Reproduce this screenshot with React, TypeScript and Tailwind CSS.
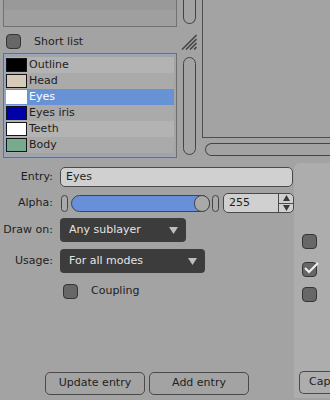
import React from "react"

interface Layer {
  name: string
  color: string
}

const layers: Layer[] = [
  { name: "Outline", color: "#000000" },
  { name: "Head", color: "#d6cbb8" },
  { name: "Eyes", color: "#ffffff" },
  { name: "Eyes iris", color: "#0000a8" },
  { name: "Teeth", color: "#ffffff" },
  { name: "Body", color: "#78aa8e" },
]

function CheckBox({ checked = false }: { checked?: boolean }) {
  return (
    <div className="relative w-[15px] h-[15px] rounded-[4px] bg-[#676767] border border-[#353535]">
      {checked && (
        <svg className="absolute -top-[3px] -left-[1px]" width="18" height="16" viewBox="0 0 18 16">
          <polyline points="3,8 7,12 16,3" fill="none" stroke="#f2f2f2" strokeWidth="2" />
        </svg>
      )}
    </div>
  )
}

function Dropdown({ label, width }: { label: string; width: string }) {
  return (
    <div className={`${width} h-[24px] rounded-[4px] bg-[#3c3c3c] flex items-center justify-between pl-[9px] pr-[8px] text-[#e4e4e4]`}>
      <span>{label}</span>
      <svg width="9" height="8" viewBox="0 0 9 8">
        <polygon points="0,1 9,1 4.5,8" fill="#bdbdbd" />
      </svg>
    </div>
  )
}

export default function App() {
  return (
    <div className="w-[330px] h-[400px] overflow-hidden bg-[#a3a3a3] text-[11px] text-[#1e1e1e] font-['DejaVu_Sans',sans-serif] flex flex-col">
      {/* top area */}
      <div className="flex h-[163px]">
        <div className="w-[202px] flex flex-col">
          <div className="flex h-[27px]">
            <div className="ml-[3px] w-[174px] h-[27px] border-l border-b border-r border-[#727272] flex flex-col">
              <div className="h-[10px] bg-[#999999]" />
              <div className="flex-1 bg-[#9f9f9f]" />
            </div>
            <div className="ml-[6px] w-[13px] h-[24px] rounded-b-full border-l border-r border-b border-[#444]" />
          </div>
          <div className="flex items-center h-[26px]">
            <div className="ml-[6px] mt-[2px]">
              <CheckBox />
            </div>
            <span className="ml-[13px] mt-[4px]">Short list</span>
            <svg className="ml-auto mr-[5px] mt-[3px]" width="16" height="16" viewBox="0 0 16 16">
              <line x1="1" y1="15.5" x2="15.5" y2="1" stroke="#474747" strokeWidth="1.6" />
              <line x1="5" y1="15.5" x2="15.5" y2="5" stroke="#474747" strokeWidth="1.6" />
              <line x1="9" y1="15.5" x2="15.5" y2="9" stroke="#474747" strokeWidth="1.6" />
              <line x1="13" y1="15.5" x2="15.5" y2="13" stroke="#474747" strokeWidth="1.6" />
            </svg>
          </div>
          <div className="flex">
            <div className="ml-[3px] w-[174px] h-[105px] border border-[#6e6e6e]">
              <div className="h-full border border-[#98a8c2] px-px pt-[2px]">
                {layers.map((l, i) => (
                  <div
                    key={l.name}
                    className={`h-[16px] flex items-center ${i === 2 ? "bg-[#6792d6] text-white" : i % 2 === 0 ? "bg-[#b3b3b3]" : "bg-[#aaaaaa]"}`}
                  >
                    <div
                      className={`w-[21px] h-[14px] ${i === 2 ? "" : "border border-[#151515]"}`}
                      style={{ backgroundColor: l.color }}
                    />
                    <span className="ml-[2px]">{l.name}</span>
                  </div>
                ))}
              </div>
            </div>
            <div className="ml-[6px] mt-[4px] w-[13px] h-[98px] rounded-full border border-[#444]" />
          </div>
        </div>
        <div className="flex-1 flex flex-col">
          <div className="h-[138px] border-l border-b border-[#4e4e4e]" />
          <div className="ml-[3px] mt-[5px] h-[13px] rounded-l-full border-l border-t border-b border-[#444]" />
        </div>
      </div>

      {/* bottom area */}
      <div className="flex flex-1">
        <div className="w-[297px] flex flex-col">
          <div className="flex items-center mt-[4px]">
            <span className="w-[53px] text-right">Entry:</span>
            <div className="ml-[7px] w-[233px] h-[20px] rounded-[5px] bg-[#d0d0d0] border border-[#4a4a4a] flex items-center pl-[5px]">
              Eyes
            </div>
          </div>
          <div className="flex items-center mt-[6px] h-[20px]">
            <span className="w-[53px] text-right">Alpha:</span>
            <div className="ml-[8px] w-[7px] h-[17px] rounded-full border border-[#444] bg-[#a9a9a9]" />
            <div className="ml-[3px] w-[139px] h-[17px] rounded-full border border-[#444] bg-[#6790d8] flex justify-end">
              <div className="w-[16px] h-[17px] -my-px -mr-px rounded-full border border-[#444] bg-[#a9a9a9]" />
            </div>
            <div className="ml-[2px] w-[7px] h-[17px] rounded-full border border-[#444] bg-[#a9a9a9]" />
            <div className="ml-[4px] w-[71px] h-[20px] rounded-[5px] bg-[#d0d0d0] border border-[#4a4a4a] flex">
              <span className="flex-1 flex items-center pl-[5px]">255</span>
              <div className="w-[15px] border-l border-[#4a4a4a] flex flex-col">
                <div className="flex-1 flex items-center justify-center border-b border-[#4a4a4a]">
                  <svg width="7" height="6" viewBox="0 0 7 6">
                    <polygon points="0,6 7,6 3.5,0" fill="#3a3a3a" />
                  </svg>
                </div>
                <div className="flex-1 flex items-center justify-center">
                  <svg width="7" height="6" viewBox="0 0 7 6">
                    <polygon points="0,0 7,0 3.5,6" fill="#3a3a3a" />
                  </svg>
                </div>
              </div>
            </div>
          </div>
          <div className="flex items-center mt-[5px]">
            <span className="w-[53px] text-right">Draw on:</span>
            <div className="ml-[7px]">
              <Dropdown label="Any sublayer" width="w-[126px]" />
            </div>
          </div>
          <div className="flex items-center mt-[7px]">
            <span className="w-[53px] text-right">Usage:</span>
            <div className="ml-[7px]">
              <Dropdown label="For all modes" width="w-[145px]" />
            </div>
          </div>
          <div className="flex items-center mt-[10px] ml-[63px]">
            <CheckBox />
            <span className="ml-[13px]">Coupling</span>
          </div>
          <div className="mt-auto mb-[5px] flex justify-center gap-[4px]">
            <button className="w-[100px] h-[23px] rounded-[5px] border border-[#4a4a4a]">Update entry</button>
            <button className="w-[100px] h-[23px] rounded-[5px] border border-[#4a4a4a]">Add entry</button>
          </div>
        </div>
        <div className="flex-1 mb-[2px] rounded-tl-[6px] bg-[#adadad] flex flex-col pl-[8px]">
          <div className="mt-[71px]">
            <CheckBox />
          </div>
          <div className="mt-[13px]">
            <CheckBox checked />
          </div>
          <div className="mt-[10px]">
            <CheckBox />
          </div>
          <div className="mt-auto mb-[4px] -ml-[3px] h-[23px] rounded-l-[5px] border-l border-t border-b border-[#4a4a4a] flex items-center pl-[9px] overflow-hidden whitespace-nowrap">
            Cap
          </div>
        </div>
      </div>
    </div>
  )
}
